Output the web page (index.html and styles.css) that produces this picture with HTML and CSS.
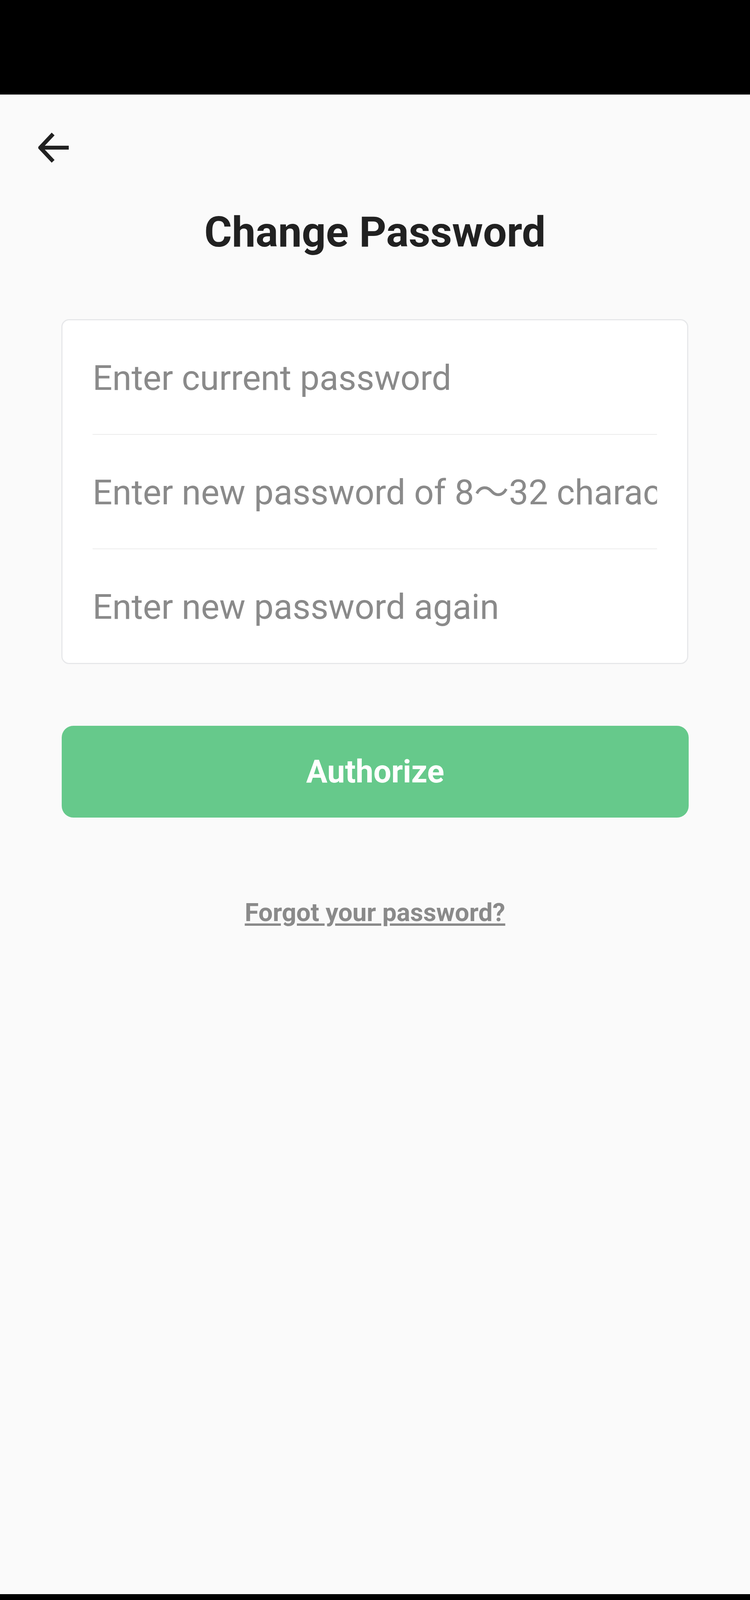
FILE: index.html
```html
<!DOCTYPE html>
<html lang="en">
<head>
<meta charset="utf-8">
<title>Change Password</title>
<link rel="stylesheet" href="styles.css">
</head>
<body>
<div class="statusbar"></div>
<main class="page">
  <div class="toolbar">
    <svg class="back" viewBox="0 0 78 78" width="78" height="78" aria-label="Back">
      <path d="M78 39 H6 M38 4 L5 39 L38 74" fill="none" stroke="#212121" stroke-width="10" stroke-linejoin="miter"/>
    </svg>
  </div>
  <h1 class="title">Change Password</h1>
  <div class="card">
    <div class="row"><span class="ph">Enter current password</span></div>
    <div class="row"><span class="ph">Enter new password of 8～32 characters</span></div>
    <div class="row"><span class="ph">Enter new password again</span></div>
  </div>
  <button class="btn">Authorize</button>
  <a class="forgot" href="#">Forgot your password?</a>
</main>
<div class="navbar"><div class="home"></div></div>
</body>
</html>
```
FILE: styles.css
```css
html, body {
  margin: 0;
  padding: 0;
}
body {
  width: 1920px;
  min-height: 4160px;
  background: #fafafa;
  font-family: Roboto, "Noto Sans CJK JP", "Liberation Sans", sans-serif;
  display: flex;
  flex-direction: column;
}
.statusbar {
  height: 242px;
  background: #000;
  flex: none;
}
.page {
  flex: 1;
  display: flex;
  flex-direction: column;
  align-items: stretch;
}
.toolbar {
  padding: 97px 0 0 98px;
  height: 78px;
}
.back {
  display: block;
}
.title {
  margin: 112px 0 0;
  font-size: 108px;
  line-height: 130px;
  font-weight: 700;
  color: #212121;
  text-align: center;
}
.card {
  margin: 158px 158px 0 157px;
  background: #fff;
  border: 3px solid #e7e8ea;
  border-radius: 20px;
  padding: 0 77px;
}
.row {
  height: 291px;
  display: flex;
  align-items: center;
  padding-top: 4px;
  box-sizing: border-box;
  overflow: hidden;
}
.row + .row {
  border-top: 2px solid #ececec;
  height: 293px;
}
.ph {
  font-size: 89px;
  line-height: 105px;
  color: #8a8a8a;
  white-space: nowrap;
}
.btn {
  margin: 158px 157px 0 158px;
  height: 235px;
  border: none;
  border-radius: 30px;
  background: #66c98b;
  color: #fff;
  font-family: Roboto, "Liberation Sans", sans-serif;
  font-size: 81px;
  font-weight: 700;
  padding: 0;
}
.forgot {
  align-self: center;
  margin-top: 205px;
  font-size: 65px;
  font-weight: 700;
  color: #8a8a8a;
  text-decoration: underline;
  text-underline-offset: 6px;
}
.navbar {
  flex: none;
  height: 79px;
  background: #000;
  display: flex;
  justify-content: center;
}
.home {
  margin-top: 38px;
  width: 352px;
  height: 11px;
  border-radius: 6px;
  background: #e8e9eb;
}
```
